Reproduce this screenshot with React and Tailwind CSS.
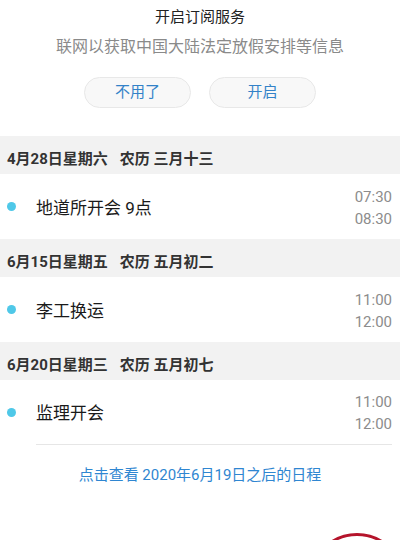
import React from 'react'

const days = [
  {
    date: '4月28日星期六',
    lunar: '农历 三月十三',
    title: '地道所开会 9点',
    start: '07:30',
    end: '08:30',
  },
  {
    date: '6月15日星期五',
    lunar: '农历 五月初二',
    title: '李工换运',
    start: '11:00',
    end: '12:00',
  },
  {
    date: '6月20日星期三',
    lunar: '农历 五月初七',
    title: '监理开会',
    start: '11:00',
    end: '12:00',
  },
]

const App = () => {
  return (
    <main className="relative h-[540px] w-[400px] overflow-hidden bg-white font-['Roboto','Noto_Sans_CJK_SC',sans-serif]">
      <section className="flex h-[136px] flex-col items-center pt-[6px]">
        <h1 className="text-[15px] leading-[22px] text-[#222]">开启订阅服务</h1>
        <p className="mt-[7px] text-[16px] leading-[24px] text-[#8a8a8a]">
          联网以获取中国大陆法定放假安排等信息
        </p>
        <div className="mt-[18px] flex gap-[18px]">
          <button className="h-[31px] w-[107px] rounded-full border border-[#e8e8e8] bg-[#f8f8f8] text-[15px] text-[#3382c8]">
            不用了
          </button>
          <button className="h-[31px] w-[107px] rounded-full border border-[#e8e8e8] bg-[#f8f8f8] text-[15px] text-[#3382c8]">
            开启
          </button>
        </div>
      </section>

      {days.map((day, i) => (
        <div key={day.date}>
          <div className="flex h-[38px] items-end bg-[#f2f2f2] px-[7px] pb-[5px] text-[15px] font-bold leading-[20px] text-[#333]">
            <span>{day.date}</span>
            <span className="ml-[12px]">{day.lunar}</span>
          </div>
          <div className="flex h-[65px] items-stretch">
            <div className="flex w-[36px] items-center pl-[7px]">
              <span className="h-[9px] w-[9px] rounded-full bg-[#4fc8e8]" />
            </div>
            <div
              className={
                i === days.length - 1
                  ? 'mr-[8px] flex flex-1 items-center justify-between border-b border-[#e6e6e6]'
                  : 'mr-[8px] flex flex-1 items-center justify-between'
              }
            >
              <span className="pt-[4px] text-[17px] text-[#1a1a1a]">{day.title}</span>
              <div className="flex flex-col items-end pt-[2px] text-[15px] leading-[22px] text-[#8c8c8c]">
                <span>{day.start}</span>
                <span>{day.end}</span>
              </div>
            </div>
          </div>
        </div>
      ))}

      <p className="pt-[19px] text-center text-[15px] leading-[22px] text-[#2f86d1]">
        点击查看 2020年6月19日之后的日程
      </p>

      <div className="absolute left-[309px] top-[533px] h-[96px] w-[96px] rounded-full border-[3px] border-[#b5142b]" />
    </main>
  )
}

export default App
